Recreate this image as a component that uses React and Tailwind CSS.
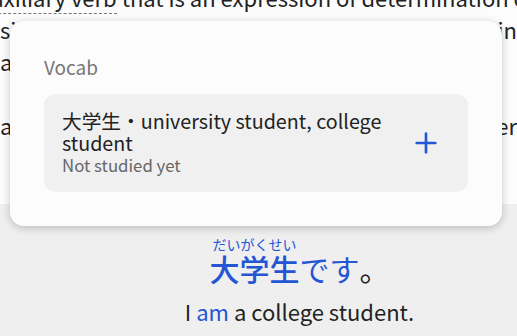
import React from 'react';
import { Plus } from 'lucide-react';

const font = { fontFamily: '"Noto Sans CJK JP", "Noto Sans", sans-serif' };

const Line = ({ left, right }) => (
    <div className="flex justify-between whitespace-nowrap h-[32px]">
        <span>{left}</span>
        <span>{right}</span>
    </div>
);

const App = () => {
    return (
        <div className="relative w-[517px] h-[336px] overflow-hidden bg-[#fcfcfc] text-[#222]" style={font}>
            {/* lesson text behind the popup */}
            <div className="h-[204px] overflow-hidden">
                <div className="-mt-[19px] text-[22px] leading-[32px]">
                    <div className="whitespace-nowrap -ml-[22px]">
                        <span className="border-b border-dashed border-[#777]">auxiliary verb</span> that is an expression of determination or
                    </div>
                    <Line left="si" right="min" />
                    <Line left="a" right="" />
                    <Line left="" right="" />
                    <Line left="a" right="er" />
                </div>
            </div>

            {/* example sentence */}
            <div className="h-[132px] bg-[#efefef] flex flex-col items-center pt-[34px] pl-[82px]">
                <div className="flex items-end">
                    <div className="flex flex-col items-center text-[#2456d3]">
                        <span className="text-[14px] leading-[13px]">だいがくせい</span>
                        <span className="text-[30px] leading-[34px] font-medium">大学生</span>
                    </div>
                    <span className="text-[30px] leading-[34px] text-[#2456d3]">です</span>
                    <span className="text-[30px] leading-[34px]">。</span>
                </div>
                <div className="mt-[13px] text-[22px] leading-[26px]">
                    I <span className="text-[#2456d3]">am</span> a college student.
                </div>
            </div>

            {/* vocab popup */}
            <div className="absolute left-[10px] top-[21px] w-[492px] h-[205px] rounded-[14px] bg-[#fcfcfc] shadow-[0_2px_8px_rgba(0,0,0,0.22)] px-[34px] pt-[34px]">
                <div className="text-[19px] leading-[24px] text-[#777]">Vocab</div>
                <div className="mt-[15px] flex items-center rounded-[12px] bg-[#f0f0f0] pl-[18px] pr-[26px] h-[98px]">
                    <div className="flex-1">
                        <div className="text-[19.7px] leading-[22px] text-[#222] w-[330px]">
                            大学生・university student, college student
                        </div>
                        <div className="text-[16.8px] leading-[22px] text-[#666]">Not studied yet</div>
                    </div>
                    <Plus size={32} strokeWidth={2} className="text-[#2456d3]" />
                </div>
            </div>
        </div>
    );
};

export default App;
